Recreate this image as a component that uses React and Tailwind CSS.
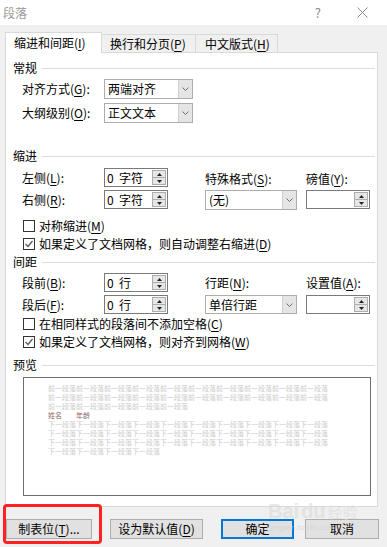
import React from 'react'

const font = { fontFamily: '"Noto Sans CJK SC", "Noto Sans", sans-serif' }

// mnemonic letter, underlined like a Windows dialog
const M = ({ c }) => (
  <>
    (<u className="underline-offset-2">{c}</u>)
  </>
)

function Heading({ text }) {
  return (
    <div className="flex h-[16px] items-center mr-[2px]">
      <span className="text-[12px] leading-[16px] text-black">{text}</span>
      <div className="ml-[5px] h-px flex-1 bg-[#dcdcdc]" />
    </div>
  )
}

function Chevron() {
  return (
    <svg width="7" height="4" viewBox="0 0 7 4">
      <polyline points="0.5,0.5 3.5,3.5 6.5,0.5" fill="none" stroke="#6d6d6d" strokeWidth="1" />
    </svg>
  )
}

function Combo({ value, w, h = 'h-[20px]' }) {
  return (
    <div className={`flex ${h} ${w} items-center border border-[#adadad] bg-white`}>
      <span className="pl-[3px] text-[12px] leading-[16px]">{value}</span>
      <div className="ml-auto flex h-full w-[14px] items-center justify-center border-l border-[#cfcfcf] bg-[#e5e5e5]">
        <Chevron />
      </div>
    </div>
  )
}

function Spin({ value }) {
  return (
    <div className="flex h-[19px] w-[64px] items-center border border-[#7a7a7a] bg-white">
      <span className="pl-[2px] text-[12px] leading-[16px] whitespace-pre">{value}</span>
      <div className="ml-auto mr-[1px] flex h-[15px] w-[14px] flex-col border border-[#adadad] bg-[#e6e6e6]">
        <div className="flex flex-1 items-center justify-center border-b border-[#adadad]">
          <svg width="5" height="3" viewBox="0 0 5 3"><polygon points="0,3 5,3 2.5,0" fill="#222" /></svg>
        </div>
        <div className="flex flex-1 items-center justify-center">
          <svg width="5" height="3" viewBox="0 0 5 3"><polygon points="0,0 5,0 2.5,3" fill="#222" /></svg>
        </div>
      </div>
    </div>
  )
}

function Check({ checked, children }) {
  return (
    <div className="ml-[10px] flex h-[18px] items-center">
      <div className="flex h-[12px] w-[12px] items-center justify-center border border-[#333] bg-white">
        {checked && (
          <svg width="10" height="10" viewBox="0 0 10 10">
            <polyline points="1.5,5 4,7.5 8.5,2" fill="none" stroke="#555" strokeWidth="1.2" />
          </svg>
        )}
      </div>
      <span className="ml-[4px] text-[12px] leading-[16px]">{children}</span>
    </div>
  )
}

const Label = ({ children, w = 'w-[82px]' }) => (
  <span className={`${w} text-[12px] leading-[16px]`}>{children}</span>
)

function Btn({ w, ml = '', primary, children }) {
  return (
    <div
      className={`${ml} ${w} flex h-[20px] items-center justify-center bg-[#e1e1e1] text-[12px] leading-[16px] ${
        primary ? 'border-2 border-[#0078d7]' : 'border border-[#adadad]'
      }`}
    >
      {children}
    </div>
  )
}

const before = '前一段落'.repeat(10)
const after = '下一段落'.repeat(10)

export default function App() {
  return (
    <div className="relative h-[547px] w-[387px] overflow-hidden bg-[#f0f0f0] text-black" style={font}>
      {/* title bar */}
      <div className="flex h-[25px] items-center bg-white pl-[3px] pr-[19px]">
        <span className="text-[12px] leading-[16px] text-[#9a9a9a]">段落</span>
        <span className="ml-auto text-[13px] leading-[16px] text-[#8a8a8a]">?</span>
        <svg className="ml-[36px]" width="11" height="11" viewBox="0 0 11 11">
          <path d="M0.5 0.5 L10.5 10.5 M10.5 0.5 L0.5 10.5" stroke="#8a8a8a" strokeWidth="1" />
        </svg>
      </div>

      {/* tabs */}
      <div className="mt-[7px] flex h-[20px] items-end pl-[5px]">
        <div className="relative z-10 -mb-px flex h-[21px] w-[97px] items-center border-l border-r border-t border-[#d9d9d9] bg-white pl-[8px] text-[12px] leading-[16px]">
          缩进和间距<M c="I" />
        </div>
        <div className="-ml-px flex h-[18px] w-[95px] items-center border-r border-t border-[#d9d9d9] pl-[9px] text-[12px] leading-[16px]">
          换行和分页<M c="P" />
        </div>
        <div className="flex h-[18px] w-[82px] items-center border-r border-t border-[#d9d9d9] pl-[9px] text-[12px] leading-[16px]">
          中文版式<M c="H" />
        </div>
      </div>

      {/* panel */}
      <div className="ml-[5px] flex h-[455px] w-[373px] flex-col border border-[#d9d9d9] bg-white pl-[7px]">
        <div className="mt-[7px]"><Heading text="常规" /></div>

        <div className="mt-[3px] ml-[9px] flex h-[20px] items-center">
          <Label>对齐方式<M c="G" />:</Label>
          <Combo value="两端对齐" w="w-[89px]" />
        </div>
        <div className="mt-[4px] ml-[9px] flex h-[20px] items-center">
          <Label>大纲级别<M c="O" />:</Label>
          <Combo value="正文文本" w="w-[89px]" />
        </div>

        <div className="mt-[25px]"><Heading text="缩进" /></div>

        <div className="mt-[4px] ml-[9px] flex h-[19px] items-center">
          <Label>左侧<M c="L" />:</Label>
          <Spin value="0  字符" />
          <div className="w-[37px]" />
          <span className="w-[92px] self-end text-[12px] leading-[16px]">特殊格式<M c="S" />:</span>
          <span className="ml-[9px] self-end text-[12px] leading-[16px]">磅值<M c="Y" />:</span>
        </div>
        <div className="mt-[3px] ml-[9px] flex h-[19px] items-center">
          <Label>右侧<M c="R" />:</Label>
          <Spin value="0  字符" />
          <div className="w-[37px]" />
          <Combo value="(无)" w="w-[92px]" h="h-[20px]" />
          <div className="ml-[9px]"><Spin value="" /></div>
        </div>

        <div className="mt-[8px]">
          <Check>对称缩进<M c="M" /></Check>
          <Check checked>如果定义了文档网格，则自动调整右缩进<M c="D" /></Check>
        </div>

        <div className="mt-[1px]"><Heading text="间距" /></div>

        <div className="mt-[3px] ml-[9px] flex h-[19px] items-center">
          <Label>段前<M c="B" />:</Label>
          <Spin value="0  行" />
          <div className="w-[37px]" />
          <span className="w-[92px] text-[12px] leading-[16px]">行距<M c="N" />:</span>
          <span className="ml-[9px] text-[12px] leading-[16px]">设置值<M c="A" />:</span>
        </div>
        <div className="mt-[3px] ml-[9px] flex h-[19px] items-center">
          <Label>段后<M c="F" />:</Label>
          <Spin value="0  行" />
          <div className="w-[37px]" />
          <Combo value="单倍行距" w="w-[92px]" h="h-[19px]" />
          <div className="ml-[9px]"><Spin value="" /></div>
        </div>

        <div className="mt-[1px]">
          <Check>在相同样式的段落间不添加空格<M c="C" /></Check>
          <Check checked>如果定义了文档网格，则对齐到网格<M c="W" /></Check>
        </div>

        <div className="mt-[6px]"><Heading text="预览" /></div>

        {/* preview */}
        <div className="mt-[4px] ml-[10px] h-[119px] w-[348px] border border-[#6e6e6e] bg-white pl-[24px] pt-[6px] text-[7px] leading-[9px] whitespace-nowrap">
          <div className="text-[#cccccc]">{before}</div>
          <div className="text-[#cccccc]">{before}</div>
          <div className="text-[#cccccc]">{'前一段落'.repeat(5)}</div>
          <div className="flex text-[#8a6565]">
            <span>姓名</span>
            <span className="ml-[14px]">年龄</span>
          </div>
          <div className="text-[#cccccc]">{after}</div>
          <div className="text-[#cccccc]">{after}</div>
          <div className="text-[#cccccc]">{after}</div>
          <div className="text-[#cccccc]">{'下一段落'.repeat(4)}</div>
        </div>
      </div>

      {/* buttons */}
      <div className="mt-[12px] flex pl-[6px]">
        <Btn w="w-[86px]">制表位<M c="T" />...</Btn>
        <Btn w="w-[93px]" ml="ml-[18px]">设为默认值<M c="D" /></Btn>
        <Btn w="w-[73px]" ml="ml-[18px]" primary>确定</Btn>
        <Btn w="w-[74px]" ml="ml-[11px]">取消</Btn>
      </div>

      {/* red annotation box */}
      <div className="pointer-events-none absolute left-[3px] top-[504px] h-[40px] w-[99px] rounded-[4px] border-[3px] border-[#ff2222]" />

      {/* faint watermark */}
      <div className="pointer-events-none absolute left-[268px] top-[500px] flex items-end text-[#dadada] opacity-60">
        <span className="text-[20px] font-bold leading-[22px]" style={{ fontFamily: '"Liberation Sans", sans-serif' }}>Bai</span>
        <span className="ml-[2px] text-[20px] font-bold leading-[22px]" style={{ fontFamily: '"Liberation Sans", sans-serif' }}>du</span>
        <span className="ml-[2px] text-[15px] leading-[20px]">经验</span>
      </div>
      <div className="pointer-events-none absolute left-[270px] top-[523px] text-[8px] leading-[10px] text-[#d0d0d0] opacity-60" style={{ fontFamily: '"Liberation Sans", sans-serif' }}>
        jingyan.baidu.com
      </div>
    </div>
  )
}
